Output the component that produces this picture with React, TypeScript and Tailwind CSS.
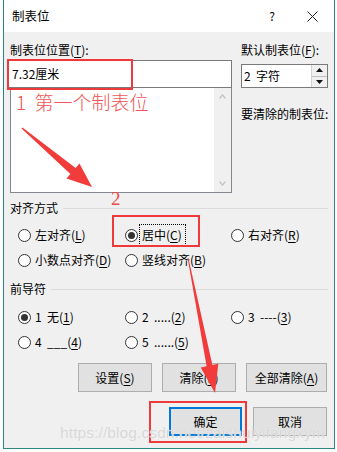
import React from 'react'

const font = { fontFamily: '"Noto Sans CJK SC", "Noto Sans", sans-serif' }

function U({ children }: { children: React.ReactNode }) {
  return <span className="underline underline-offset-2">{children}</span>
}

function Radio({ checked, children, focus }: { checked?: boolean; children: React.ReactNode; focus?: boolean }) {
  return (
    <div className="flex items-center h-[16px]">
      <span className="w-[13px] h-[13px] rounded-full border border-[#333] bg-white flex items-center justify-center shrink-0">
        {checked && <span className="w-[7px] h-[7px] rounded-full bg-[#333]" />}
      </span>
      <span className={'ml-[4px] whitespace-nowrap ' + (focus ? 'outline outline-1 outline-dotted outline-black outline-offset-[2px] pr-[1px]' : '')}>
        {children}
      </span>
    </div>
  )
}

function Header({ title }: { title: string }) {
  return (
    <div className="flex items-center h-[16px] pl-[6px] pr-[6px]">
      <span className="whitespace-nowrap">{title}</span>
      <div className="flex-1 h-px bg-[#dcdcdc] ml-[5px]" />
    </div>
  )
}

function Btn({ children, w, primary }: { children: React.ReactNode; w: string; primary?: boolean }) {
  return (
    <div
      className={
        'h-[29px] flex items-center justify-center bg-[#e1e1e1] ' +
        w +
        (primary ? ' border-2 border-[#0078d7]' : ' border border-[#adadad]')
      }
    >
      {children}
    </div>
  )
}

export default function App() {
  return (
    <div className="relative w-[337px] h-[452px] bg-white overflow-hidden text-[12px] leading-[16px] text-black" style={font}>
      <div className="ml-[3px] mr-[2px] h-[449px] border-l border-r border-b border-[#2e8482] flex flex-col">
        {/* Title bar */}
        <div className="h-[32px] bg-white flex items-center shrink-0">
          <span className="ml-[8px] text-[12.5px]">制表位</span>
          <span className="ml-auto mr-[32px] text-[12px]">?</span>
          <svg width="11" height="11" viewBox="0 0 11 11" className="mr-[16px]">
            <path d="M0.5 0.5 L10.5 10.5 M10.5 0.5 L0.5 10.5" stroke="#222" strokeWidth="1" />
          </svg>
        </div>
        {/* Body */}
        <div className="flex-1 bg-[#f0f0f0] flex flex-col">
          <div className="flex">
            <div className="ml-[4px] w-[224px] flex flex-col">
              <div className="mt-[10px] pl-[2px]">
                制表位位置(<U>T</U>):
              </div>
              <div className="mt-[2px] h-[28px] bg-white border border-[#7a7a7a] flex items-center pl-[3px]">
                7.32厘米
              </div>
              <div className="ml-[2px] h-[105px] bg-white border-l border-r border-b border-[#828790] flex justify-end">
                <div className="w-[17px] bg-[#f0f0f0] flex flex-col items-center justify-between py-[6px]">
                  <svg width="7" height="5" viewBox="0 0 7 5">
                    <path d="M0.5 4.5 L3.5 1 L6.5 4.5" fill="none" stroke="#c2c2c2" strokeWidth="1.2" />
                  </svg>
                  <svg width="7" height="5" viewBox="0 0 7 5">
                    <path d="M0.5 0.5 L3.5 4 L6.5 0.5" fill="none" stroke="#c2c2c2" strokeWidth="1.2" />
                  </svg>
                </div>
              </div>
            </div>
            <div className="ml-[9px] flex flex-col">
              <div className="mt-[10px] whitespace-nowrap">
                默认制表位(<U>F</U>):
              </div>
              <div className="mt-[6px] w-[87px] h-[24px] bg-white border border-[#7a7a7a] flex items-center">
                <span className="pl-[2px] flex-1">2&nbsp; 字符</span>
                <div className="w-[16px] h-full flex flex-col border-l border-[#d0d0d0]">
                  <div className="flex-1 bg-[#f0f0f0] border-b border-[#c0c0c0] flex items-center justify-center">
                    <svg width="7" height="4" viewBox="0 0 7 4"><path d="M0 4 L3.5 0 L7 4 Z" fill="#111" /></svg>
                  </div>
                  <div className="flex-1 bg-[#f0f0f0] flex items-center justify-center">
                    <svg width="7" height="4" viewBox="0 0 7 4"><path d="M0 0 L3.5 4 L7 0 Z" fill="#111" /></svg>
                  </div>
                </div>
              </div>
              <div className="mt-[18px] whitespace-nowrap">要清除的制表位:</div>
            </div>
          </div>

          <div className="mt-[7px]">
            <Header title="对齐方式" />
          </div>
          <div className="mt-[11px] grid grid-cols-[107px_106px_1fr] gap-y-[9px] pl-[14px]">
            <Radio>左对齐(<U>L</U>)</Radio>
            <Radio checked focus>居中(<U>C</U>)</Radio>
            <Radio>右对齐(<U>R</U>)</Radio>
            <Radio>小数点对齐(<U>D</U>)</Radio>
            <Radio>竖线对齐(<U>B</U>)</Radio>
          </div>

          <div className="mt-[13px]">
            <Header title="前导符" />
          </div>
          <div className="mt-[12px] grid grid-cols-[107px_106px_1fr] gap-y-[9px] pl-[14px]">
            <Radio checked>1&nbsp; 无(<U>1</U>)</Radio>
            <Radio>2&nbsp; .....(<U>2</U>)</Radio>
            <Radio>3&nbsp; ----(<U>3</U>)</Radio>
            <Radio>4&nbsp; ___(<U>4</U>)</Radio>
            <Radio>5&nbsp; ......(<U>5</U>)</Radio>
          </div>

          <div className="mt-[13px] flex gap-[10px] pl-[74px]">
            <Btn w="w-[74px]">设置(<U>S</U>)</Btn>
            <Btn w="w-[74px]">清除(<U>E</U>)</Btn>
            <Btn w="w-[81px]">全部清除(<U>A</U>)</Btn>
          </div>

          <div className="mt-[15px] flex gap-[11px] pl-[165px]">
            <Btn w="w-[73px]" primary>确定</Btn>
            <Btn w="w-[74px]">取消</Btn>
          </div>
        </div>
      </div>

      {/* Annotations */}
      <div className="absolute left-[7px] top-[59px] w-[126px] h-[31px] border-2 border-[#ee3a3a]" />
      <div className="absolute left-[112px] top-[215px] w-[88px] h-[32px] border-2 border-[#ee3a3a]" />
      <div className="absolute left-[149px] top-[401px] w-[98px] h-[42px] border-2 border-[#ee3a3a]" />
      <div className="absolute left-[16px] top-[90px] text-[19px] leading-[24px] font-light text-[#f05454] whitespace-nowrap" style={font}>
        1&nbsp; 第一个制表位
      </div>
      <div
        className="absolute left-[111px] top-[189px] text-[19px] leading-[20px] text-[#ef4a4a]"
        style={{ fontFamily: '"Liberation Serif", serif' }}
      >
        2
      </div>
      <div
        className="absolute left-[60px] top-[423px] text-[15.5px] leading-[20px] text-[#d6d6d6] whitespace-nowrap tracking-[0.1px]"
        style={{ fontFamily: '"Liberation Sans", sans-serif', textShadow: '0 0 1px #fff' }}
      >
        https://blog.csdn.net/zaishuiyifangxym
      </div>
      <svg className="absolute left-0 top-0" width="337" height="452" viewBox="0 0 337 452">
        <polygon points="21.5,128.5 70.4,174 66.5,178.6 92,187 79.5,163.4 75.6,168 22.5,127.5" fill="#f23c3c" />
        <polygon points="187.6,258 206.6,366.2 200.7,367.4 215,393 218.3,363.8 212.4,365 188.4,258" fill="#f23c3c" />
      </svg>
    </div>
  )
}
